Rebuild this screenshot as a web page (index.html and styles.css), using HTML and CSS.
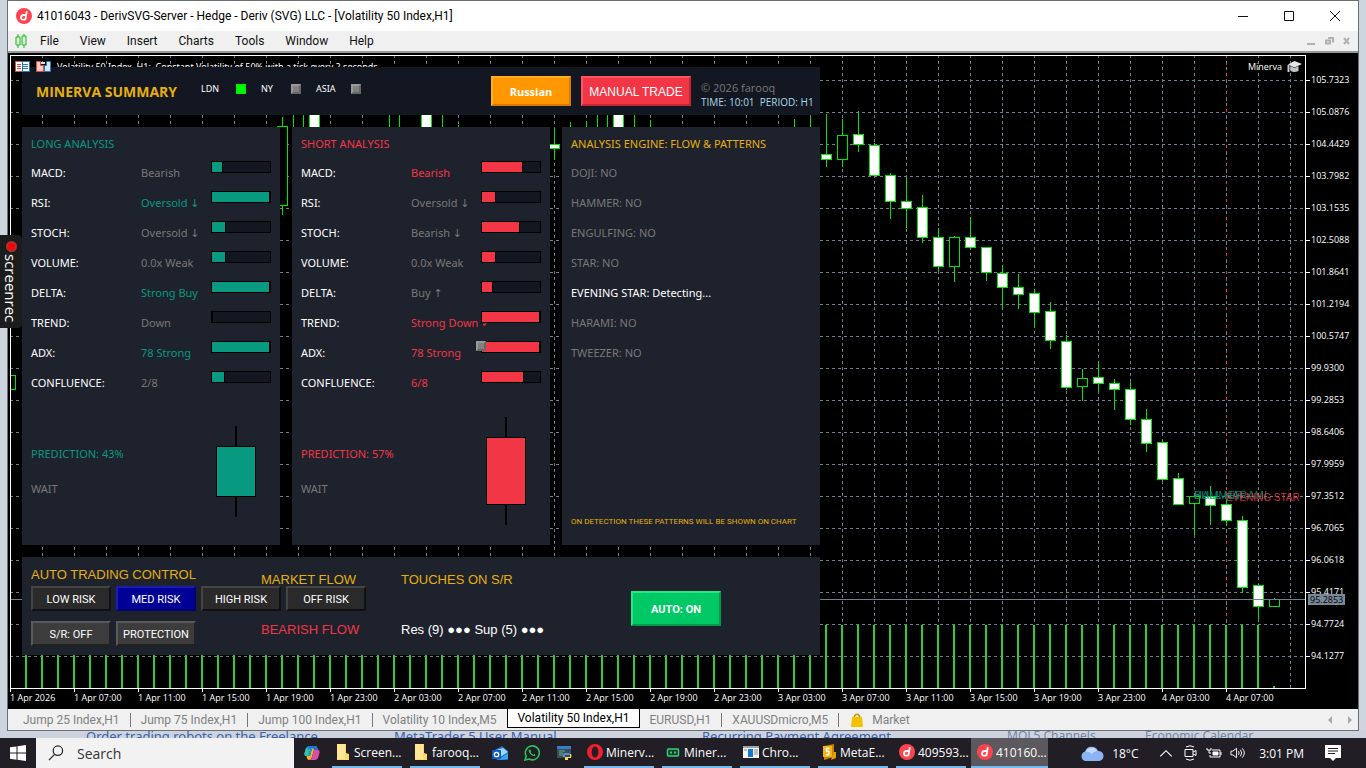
FILE: index.html
```html
<!DOCTYPE html>
<html lang="en">
<head>
  <meta charset="UTF-8" />
  <meta name="viewport" content="width=device-width, initial-scale=1.0"/>
  <title>Minerva Summary</title>
  <link rel="stylesheet" href="styles.css">
</head>
<body>
  <div class="window">
    <header class="titlebar">
      <svg class="deriv" viewBox="0 0 16 16"><circle cx="8" cy="8" r="8" fill="#ff444f"/><path d="M10.8 3.2 9.4 11.6M9.9 7H7.6C6.4 7 5.2 8 5 9.3c-.2 1.300.6 2.300 1.800 2.300h2.700" fill="none" stroke="#fff" stroke-width="1.800"/></svg>
      <span class="title">41016043 - DerivSVG-Server - Hedge - Deriv (SVG) LLC - [Volatility 50 Index,H1]</span>
      <div class="win-buttons">
        <button aria-label="Minimize"><svg viewBox="0 0 12 12"><path d="M1 6.500h10"/></svg></button>
        <button aria-label="Maximize"><svg viewBox="0 0 12 12"><path d="M1.500 1.500h9v9h-9z"/></svg></button>
        <button aria-label="Close"><svg viewBox="0 0 12 12"><path d="M1 1l10 10M11 1L1 11"/></svg></button>
      </div>
    </header>

    <nav class="menubar">
      <svg class="menu-icon" viewBox="0 0 12 14"><path d="M3 0v14M9 0v14" stroke="#22b422"/><path d="M1 3h4v8H1zM7 2h4v9H7z" fill="#d8f5d8" stroke="#22b422"/></svg>
      <button>File</button><button>View</button><button>Insert</button><button>Charts</button><button>Tools</button><button>Window</button><button>Help</button>
      <svg class="mdi" viewBox="0 0 44 10"><path d="M1 8h8M20 4.500h4v3h-4zM22 2h5v4.500M38 2l5 6M43 2l-5 6" fill="none" stroke="#b0b0b0" stroke-width="2"/></svg>
    </nav>

    <main class="chart">
      <div class="plot">
        <svg class="plot-svg" id="plot"></svg>
        <div class="chart-info">Volatility 50 Index, H1:&nbsp; Constant Volatility of 50% with a tick every 2 seconds</div>
        <svg class="chart-icons" viewBox="0 0 36 11">
          <path d="M0 0h7v11H0z" fill="#e04a42"/><path d="M7 0h8v11H7z" fill="#2578b5"/>
          <path d="M1 1h6v9H1zM8 1h6v9H8z" fill="#fff"/>
          <path d="M2 3.500h4M2 5.500h4M2 7.500h4" stroke="#e04a42"/><path d="M8 3.500h5M8 5.500h5M8 7.500h5" stroke="#2578b5"/>
          <path d="M21.500.5h4v4h3v6h-7z" fill="#ffd0c8" stroke="#e04a42"/><path d="M35.500.5h-4v4h-2v6h6z" fill="#cfe8ff" stroke="#2578b5"/>
          <path d="M26 1h4v2h-4z" fill="#ddd"/>
        </svg>
        <div class="expert">Minerva
          <svg viewBox="0 0 15 12"><path d="M7.500 0 15 3 7.500 6.500 1 3.500z" fill="#e6e6e6"/><path d="M3.500 5v5q4 2 8 0V5l-4 2z" fill="#c4c4c4"/><path d="M1.500 4v7" stroke="#ccc" stroke-width="2"/></svg>
        </div>
      </div>
      <div class="price-axis" id="prices"></div>
      <div class="time-axis" id="times"></div>

      <section class="panel">
        <header class="card panel-head">
          <h1>MINERVA SUMMARY</h1>
          <div class="sessions">
            <span>LDN</span><i class="lamp on"></i>
            <span>NY</span><i class="lamp"></i>
            <span>ASIA</span><i class="lamp"></i>
          </div>
          <button class="btn btn-lang">Russian</button>
          <button class="btn btn-manual">MANUAL TRADE</button>
          <div class="credits">
            <div class="owner">© 2026 farooq</div>
            <div class="clock">TIME: 10:01&nbsp; PERIOD: H1</div>
          </div>
        </header>

        <div class="columns">
          <section class="card long">
            <h2>LONG ANALYSIS</h2>
            <div class="row"><span>MACD:</span><span class="val">Bearish</span><div class="bar"><i style="width:11px"></i></div></div>
            <div class="row"><span>RSI:</span><span class="val hit">Oversold ↓</span><div class="bar"><i style="width:58px"></i></div></div>
            <div class="row"><span>STOCH:</span><span class="val">Oversold ↓</span><div class="bar"><i style="width:14px"></i></div></div>
            <div class="row"><span>VOLUME:</span><span class="val">0.0x Weak</span><div class="bar"><i style="width:14px"></i></div></div>
            <div class="row"><span>DELTA:</span><span class="val hit">Strong Buy</span><div class="bar"><i style="width:58px"></i></div></div>
            <div class="row"><span>TREND:</span><span class="val">Down</span><div class="bar"><i style="width:0px"></i></div></div>
            <div class="row"><span>ADX:</span><span class="val hit">78 Strong</span><div class="bar"><i style="width:58px"></i></div></div>
            <div class="row"><span>CONFLUENCE:</span><span class="val">2/8</span><div class="bar"><i style="width:13px"></i></div></div>
            <div class="forecast">
              <div><p class="hit">PREDICTION: 43%</p><p class="val">WAIT</p></div>
              <div class="candle"><i style="height:51px"></i></div>
            </div>
          </section>

          <section class="card short">
            <h2>SHORT ANALYSIS</h2>
            <div class="row"><span>MACD:</span><span class="val hit">Bearish</span><div class="bar"><i style="width:41px"></i></div></div>
            <div class="row"><span>RSI:</span><span class="val">Oversold ↓</span><div class="bar"><i style="width:14px"></i></div></div>
            <div class="row"><span>STOCH:</span><span class="val">Bearish ↓</span><div class="bar"><i style="width:38px"></i></div></div>
            <div class="row"><span>VOLUME:</span><span class="val">0.0x Weak</span><div class="bar"><i style="width:14px"></i></div></div>
            <div class="row"><span>DELTA:</span><span class="val">Buy ↑</span><div class="bar"><i style="width:11px"></i></div></div>
            <div class="row"><span>TREND:</span><span class="val hit">Strong Down ✓</span><div class="bar"><i style="width:58px"></i></div></div>
            <div class="row"><span>ADX:</span><span class="val hit">78 Strong</span><div class="bar"><i style="width:58px"></i><b class="lamp stray"></b></div></div>
            <div class="row"><span>CONFLUENCE:</span><span class="val hit">6/8</span><div class="bar"><i style="width:42px"></i></div></div>
            <div class="forecast">
              <div><p class="hit">PREDICTION: 57%</p><p class="val">WAIT</p></div>
              <div class="candle"><i style="height:68px"></i></div>
            </div>
          </section>

          <section class="card engine">
            <h2>ANALYSIS ENGINE: FLOW &amp; PATTERNS</h2>
            <ul>
              <li>DOJI: NO</li>
              <li>HAMMER: NO</li>
              <li>ENGULFING: NO</li>
              <li>STAR: NO</li>
              <li class="active">EVENING STAR: Detecting...</li>
              <li>HARAMI: NO</li>
              <li>TWEEZER: NO</li>
            </ul>
            <p class="note">ON DETECTION THESE PATTERNS WILL BE SHOWN ON CHART</p>
          </section>
        </div>

        <footer class="card trading">
          <div class="controls">
            <h3>AUTO TRADING CONTROL</h3>
            <div class="btn-row">
              <button class="btn">LOW RISK</button>
              <button class="btn btn-med">MED RISK</button>
              <button class="btn">HIGH RISK</button>
              <button class="btn">OFF RISK</button>
            </div>
            <div class="btn-row">
              <button class="btn btn-alt">S/R: OFF</button>
              <button class="btn btn-alt">PROTECTION</button>
            </div>
          </div>
          <div class="info flow"><h3>MARKET FLOW</h3><p class="bear">BEARISH FLOW</p></div>
          <div class="info touches"><h3>TOUCHES ON S/R</h3><p>Res (9) ●●● Sup (5) ●●●</p></div>
          <button class="btn btn-auto">AUTO: ON</button>
        </footer>
      </section>
    </main>

    <nav class="tabs">
      <a href="#">Jump 25 Index,H1</a>
      <a href="#">Jump 75 Index,H1</a>
      <a href="#">Jump 100 Index,H1</a>
      <a href="#" class="last">Volatility 10 Index,M5</a>
      <a href="#" class="current">Volatility 50 Index,H1</a>
      <a href="#">EURUSD,H1</a>
      <a href="#">XAUUSDmicro,M5</a>
      <a href="#" class="last market"><svg viewBox="0 0 12 14"><path d="M3.500 5V3q2.500-3.500 5 0v2" fill="none" stroke="#c89000" stroke-width="1.500"/><path d="M1 4h10l1 10H0z" fill="#f5c000"/></svg>Market</a>
      <svg class="tab-scroll" viewBox="0 0 24 8"><path d="M4 0v8L0 4zM20 0v8l4-4z" fill="#aaa"/></svg>
    </nav>
  </div>

  <div class="behind">
    <a href="#">Order trading robots on the Freelance</a>
    <a href="#">MetaTrader 5 User Manual</a>
    <a href="#">Recurring Payment Agreement</a>
    <a href="#" class="dim">MQL5 Channels</a>
    <a href="#" class="dim">Economic Calendar</a>
  </div>

  <div class="screenrec"><i></i>screenrec</div>

  <footer class="taskbar">
    <button class="start" aria-label="Start"><svg viewBox="0 0 16 16"><path d="M0 2.300 6.500 1.400v6.200H0zM7.500 1.200 16 0v7.600H7.500zM0 8.500h6.500v6.200L0 13.800zM7.500 8.500H16V16l-8.500-1.200z" fill="#fff"/></svg></button>
    <label class="search">
      <svg viewBox="0 0 17 17"><circle cx="10.500" cy="6" r="5" fill="none" stroke="#222" stroke-width="1.300"/><path d="M7 10 1 16" stroke="#222" stroke-width="1.300"/></svg>
      <input type="text" placeholder="Search" aria-label="Search">
    </label>
    <div class="apps">
      <button class="pin" aria-label="Copilot"><svg viewBox="0 0 16 16"><path d="M5 1h6l1 3H8L6 11H2Q0 11 .500 8L2 3Q3 1 5 1z" fill="#2191d8"/><path d="M11 1q2 0 3 4h-4L8 12q-.6 3-3 3-2 0-2.500-4H6l2-7z" fill="#efb429"/><path d="M10 5h4q2 0 1.500 3L14 13q-1 2-3 2H5q2.500 0 3-3z" fill="#d94fa8"/><path d="M2 3 .500 8q-.5 3 1.500 3h2L6 4z" fill="#35c4a0"/><path d="M5 1h6q2 0 3 4h-4L9 3H6L4 6z" fill="#1f6fe0"/></svg></button>
      <button class="app"><svg viewBox="0 0 16 16"><path d="M2 0h9v9l3 1v6H2z" fill="#ffd76a"/><path d="M2 0h8v15H2z" fill="#ffe699"/></svg>Screen...</button>
      <button class="app"><svg viewBox="0 0 16 16"><path d="M2 0h9v9l3 1v6H2z" fill="#ffd76a"/><path d="M2 0h8v15H2z" fill="#ffe699"/></svg>farooq...</button>
      <button class="pin" aria-label="Outlook"><svg viewBox="0 0 16 16"><path d="M1 6 10 1l6 5v8q0 1-1 1H5z" fill="#1c6fd6"/><path d="M4 5 11 3l5 4-8 5z" fill="#9fd6ff"/><path d="M16 8v6L6 15z" fill="#39a4f0"/><rect y="5" width="9" height="9" rx="1" fill="#0f5cc0"/><circle cx="4.500" cy="9.500" r="2.200" fill="none" stroke="#fff" stroke-width="1.300"/></svg></button>
      <button class="pin" aria-label="WhatsApp"><svg viewBox="0 0 16 16"><path d="M1 15l1.200-3.800A7 7 0 1 1 5 14z" fill="none" stroke="#2bc35c" stroke-width="1.600"/><path d="M5 4.500c-1.500 2 2.500 7 5.500 6.500 1.500-.5 1-1.500 0-2l-1 .8Q7.500 9 6.500 7l.7-1Q6.500 4 5 4.500z" fill="#2bc35c"/></svg></button>
      <button class="pin" aria-label="IDLE"><svg viewBox="0 0 16 16"><path d="M1 2h14v11H1z" fill="#3c4a55"/><path d="M1 1h14v3H1z" fill="#2f7fd0"/><path d="M3 6h6M3 8h4M3 10h5" stroke="#62b08f"/><path d="M8 8h5q1 0 1 2H9v2H7v-2z" fill="#4a93d0"/><path d="M14 9h1q1 1 0 4h-3v2H9v-3h5z" fill="#ffd84a"/></svg></button>
      <button class="app"><svg viewBox="0 0 16 16"><path fill-rule="evenodd" d="M8 0a8 8 0 1 0 0 16A8 8 0 0 0 8 0zm0 2.500c4.500 0 4.500 11 0 11s-4.500-11 0-11z" fill="#f0202e"/></svg>Minerv...</button>
      <button class="app"><svg viewBox="0 0 16 16"><rect x="2.500" y="5" width="11" height="7" rx="1" fill="#123b24" stroke="#35d07f" stroke-width="1.500"/><path d="M5 7.500h2v2H5zM9 7.500h2v2H9z" fill="#35d07f"/></svg>Miner...</button>
      <button class="app"><svg viewBox="0 0 16 16"><path d="M0 2h16v12H0z" fill="#f5f5f5"/><path d="M0 2h16v2H0z" fill="#9aa6b0"/><path d="M5 5h5v8H5z" fill="#1677d2"/><path d="M1 6h3M11 6h4M11 8h4M11 10h4" stroke="#888"/></svg>Chro...</button>
      <button class="app"><svg viewBox="0 0 16 16"><path d="M3 2 13 0v13L3 16z" fill="#c98500"/><path d="M2 2h9v11H2z" fill="#f2b418"/><path d="M8.500 4.500H5.500v2.500Q8.500 6.500 8 9T5 10.500" fill="none" stroke="#fff" stroke-width="1.500"/><path d="M13 8h2v6l-5 2z" fill="#e8a000"/></svg>MetaE...</button>
      <button class="app"><svg viewBox="0 0 16 16"><circle cx="8" cy="8" r="8" fill="#ff444f"/><path d="M10.800 3.200 9.400 11.600M9.900 7H7.600C6.400 7 5.200 8 5 9.300c-.2 1.300.6 2.300 1.800 2.300h2.700" fill="none" stroke="#fff" stroke-width="1.800"/></svg>409593...</button>
      <button class="app focused"><svg viewBox="0 0 16 16"><circle cx="8" cy="8" r="8" fill="#ff444f"/><path d="M10.800 3.200 9.400 11.600M9.900 7H7.600C6.400 7 5.200 8 5 9.300c-.2 1.300.6 2.300 1.800 2.300h2.700" fill="none" stroke="#fff" stroke-width="1.800"/></svg>410160...</button>
    </div>
    <div class="tray">
      <svg class="cloud" viewBox="0 0 24 16"><path d="M5 16a5 5 0 0 1 0-9.500A7 7 0 0 1 18 6a5 5 0 0 1 1 10z" fill="#8db4f2"/><path d="M6 7a6 6 0 0 1 11-1q-3 0-5 3-3-3-6-2z" fill="#c4dafc"/></svg>
      <span class="temp">18°C</span>
      <svg class="ico" viewBox="0 0 14 14"><path d="M2 10l5-5 5 5"/></svg>
      <svg class="ico" viewBox="0 0 16 16"><path d="M3 4.500h8v7H3zM11 7l3-1.500v5L11 9M4 2q4-2.500 8 0M4 14q4 2.500 8 0"/></svg>
      <svg class="ico" viewBox="0 0 16 14"><path d="M6 4h8v7H4V9M15 6v3M1 2v2h4V2M3 4v3h2"/><path d="M7 6h5v3H7z" fill="#fff"/></svg>
      <svg class="ico" viewBox="0 0 17 14"><path d="M1 5h2l4-3v10L3 9H1zM9 5q1.500 2 0 4M11 3.500q3 3.500 0 7M13 2q4.500 5 0 10"/></svg>
      <time>3:01 PM</time>
      <svg class="notif" viewBox="0 0 16 16"><path d="M0 0h16v13h-5l-3 3-3-3H0z" fill="#fff"/><path d="M3 3.500h10M3 6h10M3 8.500h7" stroke="#222"/></svg>
    </div>
  </footer>
  <script src="chart.js"></script>
</body>
</html>
```
FILE: styles.css
```css
* { box-sizing: border-box; }
body { margin: 0; height: 100vh; display: flex; flex-direction: column; overflow: hidden; position: relative; background: #cdd5df; font-family: "Noto Sans", "Open Sans", sans-serif; font-size: 12px; }
button { font-family: inherit; border: 0; padding: 0; background: none; color: inherit; }
a { text-decoration: none; color: inherit; }
h1, h2, h3, p, ul { margin: 0; padding: 0; font-weight: normal; list-style: none; }
svg { display: block; flex: none; }

/* terminal window */
.window { flex: 1; min-height: 0; margin: 0 7px; display: flex; flex-direction: column; border: 1px solid #6b6f73; background: #f0f0f0; font-family: Roboto, "Noto Sans", sans-serif; }
.titlebar { height: 30px; flex: none; display: flex; align-items: center; gap: 5px; padding-left: 8px; background: #fff; color: #000; }
.deriv { width: 16px; height: 16px; }
.title { flex: 1; white-space: nowrap; }
.win-buttons { display: flex; }
.win-buttons button { width: 46px; height: 28px; display: flex; align-items: center; justify-content: center; }
.win-buttons svg { width: 12px; height: 12px; fill: none; stroke: #111; }
.menubar { height: 20px; flex: none; display: flex; align-items: center; gap: 21px; padding: 0 8px 1px 7px; color: #111; }
.menu-icon { width: 12px; height: 14px; margin-right: -8px; }
.menubar button { font-size: 12px; }
.mdi { width: 44px; height: 10px; margin-left: auto; }

/* chart */
.chart { flex: 1; min-height: 0; position: relative; display: grid; grid-template-columns: 1fr 52px; grid-template-rows: 1fr 20px; border-top: 2px solid #999; padding: 2px 0 0 2px; background: #000; color: #fff; font-family: "Open Sans", sans-serif; font-size: 9px; }
.plot { position: relative; overflow: hidden; border: 1px solid #fff; }
.plot-svg { position: absolute; inset: -1px; width: 100%; height: 100%; overflow: visible; }
.pattern { font: 11px "Liberation Sans", Arial, sans-serif; }
.pattern.star { font-size: 10px; }
.chart-info { position: absolute; left: 46px; top: 4px; line-height: 14px; font-family: "Noto Sans", sans-serif; white-space: nowrap; }
.chart-icons { position: absolute; left: 4px; top: 5px; width: 36px; height: 11px; z-index: 1; }
.expert { position: absolute; right: 3px; top: 4px; display: flex; align-items: center; gap: 5px; line-height: 14px; }
.expert svg { width: 15px; height: 12px; }
.price-axis { position: relative; padding-top: 9px; line-height: 32px; }
.price-axis div { height: 32px; display: flex; align-items: center; gap: 1px; }
.price-axis div::before { content: ""; width: 4px; height: 1px; background: #fff; }
.price-axis .bid { position: absolute; left: 2px; top: 539px; height: 11px; padding: 0 2px; line-height: 11px; background: #778899; color: #000; }
.price-axis .bid::before { display: none; }
.time-axis { display: flex; line-height: 18px; white-space: nowrap; }
.time-axis span { flex: none; width: 64px; }
.time-axis span::before { content: ""; display: block; width: 1px; height: 3px; margin-bottom: -3px; background: #fff; }

/* advisor panel */
.panel { position: absolute; left: 14px; top: 14px; width: 798px; display: grid; grid-template-columns: minmax(0, 1fr); gap: 12px; color: #fff; font-family: "Noto Sans", "DejaVu Sans", sans-serif; font-size: 11px; }
.card { background: #1e222d; }
.panel-head { height: 48px; display: flex; align-items: center; padding: 0 5px 0 14px; background: #131722; }
.panel-head h1 { width: 165px; flex: none; font: bold 14px "Open Sans", sans-serif; color: #e5b00f; white-space: nowrap; }
.sessions { width: 290px; flex: none; display: grid; grid-template-columns: 35px 25px 30px 25px 35px 10px; align-items: center; font-size: 9px; padding-bottom: 5px; }
.lamp { width: 10px; height: 10px; background: #808080; border: 2px solid; border-color: #999 #666 #666 #999; }
.lamp.on { background: #0f0; border-color: #00f000; }
.btn { width: 80px; height: 25px; flex: none; padding-top: 1px; border: 2px solid; border-color: #444 #111 #111 #444; background: #2a2a2a; color: #fff; font: 11px Roboto, Arial, sans-serif; white-space: nowrap; }
.btn-lang { height: 30px; margin-right: 10px; background: #ff9800; border-color: #ffb020 #d87c00 #d87c00 #ffb020; font: bold 11px "Open Sans", sans-serif; }
.btn-manual { width: 110px; height: 30px; margin-right: 10px; background: #f23645; border-color: #ff5561 #c42733 #c42733 #ff5561; font: 12px "Liberation Sans", Arial, sans-serif; }
.credits { white-space: nowrap; line-height: 14px; padding-top: 8px; }
.owner { color: #787878; font: 11px/14px "Open Sans", sans-serif; }
.clock { color: #add8e6; font: 10px/14px "Open Sans", sans-serif; }

.columns { display: grid; grid-template-columns: repeat(3, 1fr); gap: 12px; height: 418px; }
.columns .card { padding: 1px 9px 0; display: flex; flex-direction: column; }
.columns h2 { font-size: 11px; line-height: 32px; height: 30px; white-space: nowrap; }
.long { --tone: #089981; }
.short { --tone: #f23645; }
.long h2, .short h2, .columns .hit { color: var(--tone); }
.row { height: 30px; display: grid; grid-template-columns: 110px 70px 60px; line-height: 30px; white-space: nowrap; }
.val { color: #787878; }
.bar { position: relative; height: 12px; margin-top: 3px; border: 1px solid #000; background: #131722; }
.bar i { display: block; height: 10px; background: var(--tone); border-right: 1px solid #000; }
.stray { position: absolute; left: -6px; top: -1px; }
.forecast { flex: 1; display: flex; align-items: center; justify-content: space-between; padding: 0 15px 1px 0; line-height: 35px; }
.candle { display: flex; flex-direction: column; align-items: center; }
.candle::before, .candle::after { content: ""; width: 2px; height: 20px; background: #000; }
.candle i { width: 40px; border: 1px solid #000; background: var(--tone); }
.engine h2, .note { color: #e5b00f; }
.engine li { height: 30px; line-height: 30px; color: #787878; }
.engine li.active { color: #fff; }
.engine .note { margin-top: auto; padding-bottom: 16px; font: 8px/14px Roboto, sans-serif; white-space: nowrap; }

.trading { height: 98px; display: flex; padding: 9px; font-family: "Liberation Sans", Arial, sans-serif; font-size: 13px; }
.trading h3 { font-size: 13px; line-height: 18px; color: #e5b00f; white-space: nowrap; }
.controls { width: 230px; }
.controls .btn-row { display: flex; gap: 5px; width: 335px; margin-top: 2px; }
.controls .btn-row + .btn-row { margin-top: 10px; }
.btn-med { background: #000096; border-color: #1c1cb4 #00006e #00006e #1c1cb4; }
.btn-alt { background: #3c3c3c; border-color: #5a5a5a #222 #222 #5a5a5a; }
.info { padding-top: 5px; display: flex; flex-direction: column; gap: 33px; line-height: 16px; white-space: nowrap; }
.flow { width: 140px; }
.touches { width: 230px; }
.bear { color: #f23645; }
.btn-auto { width: 90px; height: 35px; margin-top: 25px; background: #00c864; border-color: #20e885 #009a4c #009a4c #20e885; font-weight: bold; }

/* chart tabs */
.tabs { height: 21px; flex: none; display: flex; align-items: center; padding: 0 6px 0 5px; color: #808080; white-space: nowrap; }
.tabs a { padding: 0 10px; line-height: 14px; border-right: 1px solid #777; }
.tabs a.last { border-right-color: transparent; }
.tabs .current { align-self: flex-start; padding: 0 9px; line-height: 18px; border: 1px solid #000; border-top: 0; background: #fff; color: #000; }
.tabs .market { display: flex; gap: 9px; padding-left: 12px; }
.tabs .market svg { width: 12px; height: 14px; }
.tab-scroll { width: 24px; height: 8px; margin-left: auto; }

/* page behind the window */
.behind { position: relative; height: 7px; flex: none; overflow: hidden; display: grid; grid-template-columns: 308px 308px 305px 138px 1fr; padding-left: 86px; background: #ccd3de; color: #3a5fa8; font-size: 13px; line-height: 10px; white-space: nowrap; }
.behind .dim { color: #7486a4; font-size: 12px; }

.screenrec { position: absolute; left: 0; top: 235px; width: 22px; height: 93px; padding-top: 6px; display: flex; align-items: center; gap: 2px; writing-mode: vertical-rl; border-radius: 0 4px 4px 0; background: #1c1c1c; color: #fff; font: 15px/20px "Open Sans", sans-serif; }
.screenrec i { width: 11px; height: 11px; border: 2px solid #a33; border-radius: 50%; background: #f00; }

/* taskbar */
.taskbar { height: 30px; flex: none; display: flex; background: #211e25; color: #fff; font-family: "Open Sans", sans-serif; font-size: 12px; }
.taskbar svg { width: 16px; height: 16px; }
.start { width: 36px; display: flex; align-items: center; justify-content: center; }
.search { width: 258px; display: flex; align-items: center; gap: 11px; padding-left: 12px; background: #f2f2f2; }
.search input { width: 200px; border: 0; outline: 0; background: none; font: 14px "Open Sans", sans-serif; color: #333; }
.search input::placeholder { color: #333; }
.apps { display: flex; margin-left: 2px; }
.pin { width: 32px; display: flex; align-items: center; justify-content: center; }
.app { width: 70px; margin: 0 4px; display: flex; align-items: center; gap: 3px; padding-left: 3px; font-size: 12px; white-space: nowrap; border-bottom: 2px solid #76b9ed; }
.focused { width: 77px; margin-left: 1px; padding-left: 6px; background: #5c595e; }
.tray { margin-left: auto; display: flex; align-items: center; gap: 8px; padding-right: 25px; white-space: nowrap; }
.tray .cloud { width: 24px; }
.temp { width: 38px; }
.ico { fill: none; stroke: #fff; }
.tray time { margin: 0 13px 0 5px; }
```
FILE: chart.js
```js
const svg = document.getElementById('plot');
const OX = 10, OY = 55; // plot frame starts here on screen

function add(name, attrs, text) {
  const el = document.createElementNS('http://www.w3.org/2000/svg', name);
  for (const k in attrs) el.setAttribute(k, attrs[k]);
  if (text) el.textContent = text;
  svg.appendChild(el);
}
function vline(x, y1, y2, stroke, extra) {
  add('path', Object.assign({ d: `M${x - OX + .5} ${y1 - OY}V${y2 - OY}`, stroke, fill: 'none' }, extra));
}

// grid
for (let x = 42; x <= 1290; x += 32) vline(x, 55, 688, '#708090', { 'stroke-dasharray': '3 3' });
for (let y = 80; y <= 656; y += 32) add('path', { d: `M0 ${y - OY + .5}H1295`, stroke: '#708090', 'stroke-dasharray': '3 3' });

// pattern markers
vline(1194, 55, 688, '#089981', { 'stroke-dasharray': '3 9' });
vline(1226, 55, 688, '#f23645', { 'stroke-dasharray': '3 6 1 8' });

// volumes
for (let x = 26; x <= 1258; x += 16) add('rect', { x: x - OX - 1, y: 625 - OY, width: 2, height: 63, fill: '#32cd32' });
add('rect', { x: 1273 - OX, y: 686 - OY, width: 2, height: 2, fill: '#32cd32' });

// x, high, top, bottom, low, bull
const candles = [
  [10, 375, 375, 390, 390, 1], [282, 117, 126, 206, 215, 1], [298, 100, 100, 135, 135, 1], [314, 100, 100, 135, 135],
  [394, 100, 100, 135, 135, 1], [426, 100, 100, 135, 135], [442, 100, 130, 135, 135], [458, 125, 130, 135, 135],
  [554, 129, 144, 149, 160], [570, 122, 130, 135, 135], [586, 121, 130, 135, 135], [602, 100, 100, 135, 135, 1],
  [618, 100, 100, 135, 135], [634, 100, 130, 135, 135], [650, 120, 130, 135, 135], [794, 119, 130, 135, 135], [810, 117, 130, 135, 135],
  [826, 114, 154, 160, 167], [842, 119, 135, 160, 167, 1], [858, 111, 134, 145, 152], [874, 143, 145, 176, 176],
  [890, 173, 175, 202, 219], [906, 178, 201, 209, 228], [922, 195, 207, 238, 243], [938, 228, 237, 267, 271],
  [954, 236, 237, 267, 282, 1], [970, 217, 237, 248, 250], [986, 247, 247, 273, 281], [1002, 265, 273, 288, 308],
  [1018, 274, 287, 295, 309], [1034, 289, 293, 313, 328], [1050, 302, 311, 341, 349], [1066, 335, 341, 388, 390],
  [1082, 369, 378, 387, 401, 1], [1098, 362, 377, 384, 391], [1114, 379, 383, 390, 410], [1130, 382, 389, 420, 425],
  [1146, 409, 419, 444, 452], [1162, 440, 442, 480, 481], [1178, 473, 478, 505, 505], [1194, 496, 496, 504, 535, 1],
  [1210, 486, 496, 506, 525], [1226, 499, 504, 521, 526], [1242, 516, 520, 588, 593], [1258, 585, 585, 607, 620],
  [1274, 598, 599, 607, 607, 1]
];
candles.forEach(([x, high, top, bottom, low, bull]) => {
  vline(x, high, low, '#00e600');
  add('rect', { x: x - OX - 4.5, y: top - OY + .5, width: 10, height: bottom - top - 1, fill: bull ? '#000' : '#fff', stroke: '#00e600' });
});

// bid line and pattern names
add('path', { d: 'M0 544.5H1295', stroke: '#708090' });
add('text', { x: 1184, y: 444, fill: '#089981', class: 'pattern', opacity: .8 }, 'BULL HARAMI');
add('text', { x: 1184, y: 444, fill: '#089981', class: 'pattern', opacity: .8 }, 'HAMMER');
add('text', { x: 1216, y: 446, fill: '#f23645', class: 'pattern star', opacity: .85 }, 'EVENING STAR');

const prices = ['105.7323', '105.0876', '104.4429', '103.7982', '103.1535', '102.5088', '101.8641', '101.2194', '100.5747', '99.9300',
  '99.2853', '98.6406', '97.9959', '97.3512', '96.7065', '96.0618', '95.4171', '94.7724', '94.1277'];
document.getElementById('prices').innerHTML = prices.map(p => `<div>${p}</div>`).join('') + '<div class="bid">95.2853</div>';

const times = ['1 Apr 2026'];
for (let h = 7; h < 24; h += 4) times.push(`1 Apr ${String(h).padStart(2, '0')}:00`);
for (let d = 2; d < 5; d++) {
  for (let h = 3; h < (d === 4 ? 8 : 24); h += 4) times.push(`${d} Apr ${String(h).padStart(2, '0')}:00`);
}
document.getElementById('times').innerHTML = times.map(t => `<span>${t}</span>`).join('');
```
